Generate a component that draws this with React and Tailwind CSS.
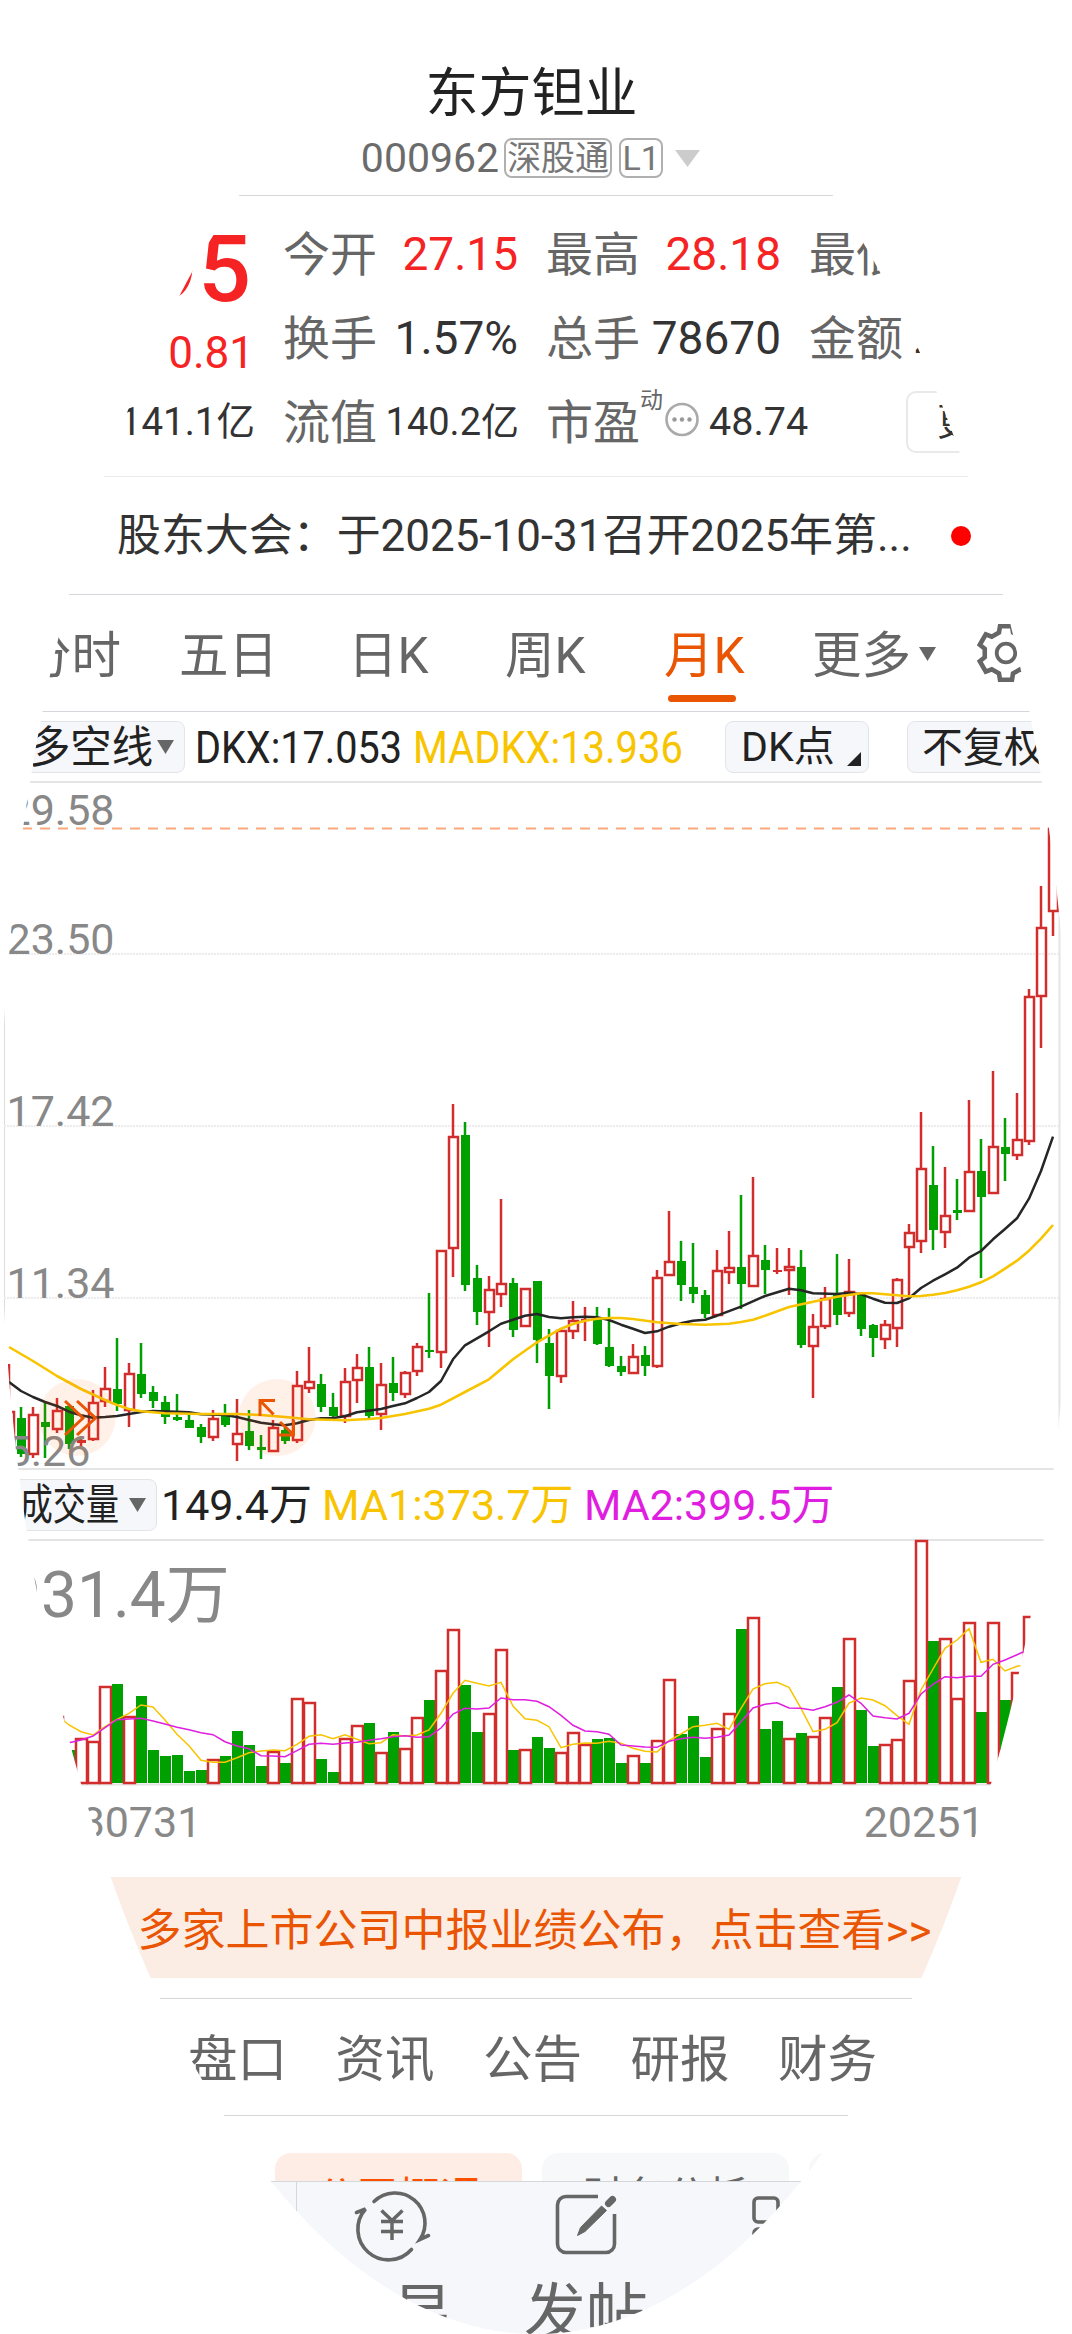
import { Fragment } from "react";

const RED = "#d22d2d";
const GREEN = "#00a000";
const ORANGE = "#ea5504";
const YELLOW = "#f8c400";
const MAGENTA = "#e01ee0";

const STEP = 12;
const FIRST_X = 9;
const VOL_BASE = 1783;

// [up, high, bodyTop, bodyBottom, low, volumeTop, volumeUp?]
const candles = [
  [1, 1364, 1411, 1455, 1460, 1730],
  [0, 1407, 1418, 1454, 1457, 1730],
  [1, 1407, 1414, 1455, 1458, 1730],
  [0, 1401, 1422, 1427, 1458, 1730],
  [1, 1398, 1410, 1430, 1433, 1716],
  [0, 1405, 1406, 1444, 1449, 1750],
  [1, 1436, 1440, 1443, 1447, 1738],
  [1, 1390, 1402, 1440, 1441, 1741],
  [1, 1367, 1388, 1402, 1407, 1686],
  [0, 1338, 1389, 1404, 1411, 1684],
  [1, 1363, 1373, 1411, 1427, 1716],
  [0, 1343, 1374, 1394, 1398, 1696],
  [0, 1386, 1392, 1401, 1408, 1750],
  [0, 1396, 1402, 1417, 1424, 1756],
  [0, 1394, 1417, 1420, 1421, 1755],
  [0, 1413, 1420, 1428, 1428, 1771],
  [0, 1424, 1427, 1437, 1443, 1770],
  [1, 1410, 1418, 1438, 1441, 1759],
  [0, 1404, 1416, 1425, 1427, 1756],
  [1, 1399, 1433, 1445, 1461, 1731, 0],
  [0, 1410, 1431, 1446, 1450, 1745],
  [0, 1435, 1447, 1450, 1459, 1766],
  [1, 1420, 1427, 1452, 1452, 1751],
  [0, 1425, 1430, 1441, 1444, 1763],
  [1, 1371, 1385, 1441, 1443, 1698],
  [1, 1347, 1381, 1389, 1393, 1702],
  [0, 1374, 1384, 1407, 1412, 1759],
  [0, 1393, 1407, 1416, 1418, 1772],
  [1, 1368, 1381, 1417, 1423, 1738],
  [1, 1354, 1367, 1381, 1403, 1725],
  [0, 1347, 1367, 1416, 1418, 1723],
  [1, 1363, 1384, 1415, 1430, 1752],
  [0, 1357, 1383, 1393, 1401, 1732],
  [1, 1371, 1372, 1395, 1398, 1748],
  [1, 1343, 1346, 1372, 1376, 1717],
  [0, 1293, 1350, 1352, 1358, 1700],
  [1, 1250, 1250, 1353, 1368, 1670],
  [1, 1104, 1136, 1249, 1277, 1629],
  [0, 1122, 1135, 1285, 1291, 1685],
  [0, 1265, 1278, 1312, 1325, 1732],
  [1, 1276, 1289, 1313, 1347, 1713],
  [1, 1199, 1283, 1295, 1307, 1649],
  [0, 1278, 1283, 1330, 1337, 1750],
  [1, 1288, 1288, 1327, 1327, 1749],
  [0, 1281, 1281, 1340, 1363, 1737],
  [0, 1329, 1343, 1376, 1409, 1748],
  [1, 1328, 1330, 1377, 1383, 1752],
  [1, 1301, 1320, 1332, 1339, 1732],
  [1, 1307, 1319, 1321, 1341, 1744],
  [0, 1307, 1319, 1344, 1345, 1739],
  [0, 1308, 1347, 1366, 1367, 1738],
  [0, 1356, 1366, 1372, 1376, 1763],
  [1, 1344, 1356, 1374, 1374, 1755],
  [0, 1346, 1355, 1366, 1376, 1763],
  [1, 1270, 1277, 1367, 1368, 1740],
  [1, 1211, 1261, 1276, 1276, 1679],
  [0, 1241, 1261, 1285, 1301, 1734],
  [0, 1243, 1287, 1294, 1303, 1716],
  [0, 1290, 1295, 1314, 1318, 1757],
  [1, 1250, 1270, 1316, 1316, 1728],
  [1, 1231, 1267, 1273, 1284, 1713],
  [0, 1195, 1267, 1284, 1309, 1629],
  [1, 1177, 1255, 1287, 1287, 1617],
  [0, 1245, 1260, 1270, 1294, 1729],
  [1, 1248, 1270, 1272, 1274, 1721, 0],
  [1, 1248, 1266, 1271, 1295, 1738],
  [0, 1250, 1267, 1345, 1348, 1733],
  [1, 1314, 1326, 1347, 1398, 1736],
  [1, 1287, 1298, 1327, 1329, 1717],
  [0, 1254, 1295, 1315, 1325, 1687],
  [1, 1259, 1291, 1314, 1317, 1638],
  [0, 1292, 1294, 1329, 1336, 1710],
  [0, 1324, 1325, 1338, 1357, 1746],
  [1, 1320, 1324, 1340, 1349, 1744],
  [1, 1278, 1279, 1329, 1347, 1739],
  [1, 1224, 1232, 1248, 1295, 1680],
  [1, 1112, 1168, 1242, 1253, 1540],
  [0, 1146, 1185, 1230, 1250, 1641],
  [1, 1167, 1215, 1233, 1248, 1638],
  [0, 1179, 1210, 1213, 1220, 1698, 1],
  [1, 1100, 1171, 1212, 1212, 1622],
  [0, 1139, 1171, 1197, 1278, 1712],
  [1, 1071, 1146, 1194, 1194, 1622],
  [0, 1118, 1147, 1154, 1181, 1700],
  [1, 1093, 1139, 1156, 1160, 1672],
  [1, 989, 996, 1142, 1145, 1616],
  [1, 886, 927, 997, 1048, 1700],
  [1, 827, 828, 912, 936, 1740],
];

const dkx = [
  [9, 1382], [21, 1391], [33, 1397], [45, 1402], [57, 1406], [69, 1411.7], [81, 1415.3],
  [93, 1417.7], [105, 1417], [117, 1416], [129, 1414], [141, 1412], [153, 1411], [177, 1411.7],
  [189, 1412.3], [201, 1414.3], [225, 1415], [237, 1417], [249, 1420], [261, 1422.7],
  [273, 1424.3], [285, 1425.3], [297, 1423.3], [309, 1420], [321, 1418.3], [333, 1418],
  [345, 1416.3], [357, 1412.3], [381, 1409], [393, 1406], [405, 1403.3], [417, 1398],
  [429, 1392], [441, 1381], [453, 1359.3], [465, 1345.3], [477, 1338.3], [489, 1331.3],
  [501, 1323.7], [513, 1319.7], [525, 1315.7], [537, 1314], [549, 1317], [561, 1318.3],
  [573, 1317.3], [585, 1316.7], [597, 1317.3], [609, 1320], [621, 1324.7], [633, 1328.7],
  [645, 1333], [657, 1331.3], [669, 1326.7], [681, 1323.3], [693, 1320.7], [705, 1319.7],
  [717, 1315.7], [741, 1306.7], [765, 1296], [789, 1288.7], [801, 1290.3], [813, 1293.3],
  [837, 1294], [849, 1292.7], [861, 1294.3], [873, 1298.7], [885, 1302.7], [897, 1303],
  [909, 1298.3], [921, 1288], [933, 1280.7], [945, 1274.3], [957, 1267.7], [969, 1257.7],
  [981, 1251], [993, 1239.3], [1005, 1229], [1017, 1218.3], [1029, 1198.7], [1041, 1171],
  [1053, 1136.7],
];

const madkx = [
  [9, 1347], [33, 1361], [57, 1376], [81, 1389], [105, 1400], [117, 1405], [129, 1409],
  [141, 1411.3], [165, 1413.3], [201, 1414], [237, 1414], [261, 1415], [285, 1417],
  [309, 1419.3], [345, 1420.3], [369, 1419], [381, 1418], [405, 1414], [429, 1408.7],
  [441, 1404.7], [465, 1392], [489, 1379.3], [513, 1359.3], [537, 1342.3], [561, 1328.7],
  [573, 1324], [585, 1320.7], [597, 1318.7], [609, 1318], [621, 1318], [633, 1319],
  [657, 1322.3], [681, 1324], [705, 1324.7], [717, 1324.3], [729, 1323.7], [741, 1322],
  [753, 1319.7], [765, 1315.7], [789, 1307], [813, 1301.7], [837, 1296.7], [861, 1293.3],
  [873, 1293.3], [897, 1295.3], [909, 1296.3], [921, 1296], [933, 1294.7], [945, 1293],
  [957, 1290.3], [969, 1286.7], [981, 1282.3], [993, 1276.3], [1005, 1268.7], [1017, 1260.7],
  [1029, 1250.7], [1041, 1238.7], [1053, 1225],
];

// moving averages of the volume, in thirds of a pixel, starting at candle 4
const volMa1 = [
  765, 795, 815, 825, 800, 778, 760, 735, 741, 780, 823, 857, 901, 907, 907, 893, 878, 873,
  870, 872, 853, 829, 824, 836, 824, 838, 851, 848, 824, 828, 825, 810, 760, 700, 661, 670,
  678, 667, 738, 776, 781, 800, 863, 853, 849, 850, 844, 850, 865, 874, 876, 842, 822, 800,
  796, 790, 808, 745, 687, 671, 667, 682, 745, 815, 808, 788, 729, 714, 720, 737, 767, 793,
  690, 627, 565, 540, 506, 607, 598, 633, 619, 615,
];
const volMa2 = [
  855, 848, 840, 828, 803, 779, 777, 775, 783, 792, 802, 809, 818, 824, 845, 858, 866, 887,
  888, 890, 872, 853, 850, 853, 849, 847, 841, 836, 830, 827, 832, 830, 804, 762, 745, 747,
  744, 714, 719, 719, 724, 740, 766, 796, 813, 815, 823, 855, 858, 861, 862, 844, 836, 832,
  835, 832, 825, 785, 744, 733, 728, 744, 745, 751, 740, 727, 705, 730, 768, 773, 777, 760,
  702, 673, 650, 653, 649, 649, 613, 600, 584, 568,
];

const toPoints = (list) => list.map((p) => p.join(",")).join(" ");
const volPoints = (list) =>
  list.map((v, i) => `${FIRST_X + (i + 4) * STEP},${(1460 + v / 3).toFixed(1)}`).join(" ");

const priceLabels = [
  ["29.58", 824.5],
  ["23.50", 953.5],
  ["17.42", 1125.5],
  ["11.34", 1297.5],
  ["5.26", 1465.5],
];

function Divider({ className = "bg-[#d6d7da]" }) {
  return <div className={`h-px w-full shrink-0 ${className}`} />;
}

function Caret({ className }) {
  return (
    <svg viewBox="0 0 10 8" preserveAspectRatio="none" className={`shrink-0 ${className}`}>
      <path d="M0 0H10L5 8Z" fill="currentColor" />
    </svg>
  );
}

function GearIcon() {
  const tooth = [
    [-7, -20.5],
    [-6, -26.8],
    [6, -26.8],
    [7, -20.5],
  ];
  const points = [];
  for (let k = 0; k < 6; k++) {
    const a = (k * Math.PI) / 3;
    tooth.forEach(([x, y]) => {
      const px = x * Math.cos(a) - y * Math.sin(a);
      const py = x * Math.sin(a) + y * Math.cos(a);
      points.push(`${px.toFixed(2)},${py.toFixed(2)}`);
    });
  }
  return (
    <svg viewBox="-30 -30 60 60" className="size-[60px] shrink-0" fill="none" stroke="#666" strokeWidth="4.6">
      <polygon points={points.join(" ")} />
      <circle r="9.3" strokeWidth="3.8" />
    </svg>
  );
}

function Header() {
  return (
    <header className="flex h-[195px] flex-col items-center pt-[64px]">
      <h1 className="mr-[9px] text-[53px] leading-[60px] font-normal text-[#222]">东方钽业</h1>
      <div className="mt-[14px] mr-[11px] flex h-10 items-center text-[#777]">
        <span className="mr-[5px] text-[41px] leading-10 text-[#6b6b6b]">000962</span>
        <span className="mr-[7px] flex h-10 w-[108px] items-center justify-center rounded-lg border-2 border-[#b0b0b0] text-[34px] leading-9">
          深股通
        </span>
        <span className="flex h-10 w-11 items-center justify-center rounded-lg border-2 border-[#b0b0b0] text-[34px] leading-9">
          L1
        </span>
        <Caret className="ml-3 h-[17px] w-[25px] text-[#ccc]" />
      </div>
    </header>
  );
}

function Stat({ label, value, className = "pl-[28px]", valueClass = "text-[46px] text-[#333]" }) {
  return (
    <div className={`flex h-[84px] items-center justify-between whitespace-nowrap ${className}`}>
      <span className="text-[47px] text-[#666]">{label}</span>
      <span className={valueClass}>{value}</span>
    </div>
  );
}

function Stats() {
  return (
    <section className="flex h-[280px] pt-[16px] leading-none">
      <div className="flex w-[255px] shrink-0 flex-col items-end whitespace-nowrap">
        <span className="mr-[4px] flex h-[114px] items-center text-[93px] font-medium text-[#f52323]">27.95</span>
        <span className="mr-[1px] flex h-[53px] items-center text-[44px] text-[#f52323]">0.81</span>
        <span className="flex h-[86px] items-center text-[38.5px] text-[#333]">141.1亿</span>
      </div>
      <div className="grid shrink-0 grid-cols-[264px_262px_262px] content-start">
        <Stat label="今开" value="27.15" valueClass="mr-px text-[46px] text-[#f52323]" />
        <Stat label="最高" value="28.18" className="pl-[27px]" valueClass="text-[46px] text-[#f52323]" />
        <Stat label="最低" value="26.80" valueClass="text-[46px] text-[#00a000]" />
        <Stat label="换手" value="1.57%" valueClass="mr-px text-[46px] text-[#333]" />
        <Stat label="总手" value="78670" className="pl-[27px]" />
        <Stat label="金额" value="2.17亿" valueClass="text-[44px] text-[#333]" />
        <Stat label="流值" value="140.2亿" valueClass="text-[38px] text-[#333]" />
        <div className="flex h-[84px] items-center pl-[27px] whitespace-nowrap">
          <span className="text-[47px] text-[#666]">市盈</span>
          <span className="mb-11 text-[23px] text-[#666]">动</span>
          <svg viewBox="0 0 36 36" className="mr-[2px] ml-px size-9 shrink-0 overflow-visible" fill="none">
            <circle cx="18" cy="15.5" r="15.5" stroke="#aaa" strokeWidth="2.6" />
            <circle cx="10.5" cy="15.5" r="2.2" fill="#999" />
            <circle cx="18" cy="15.5" r="2.2" fill="#999" />
            <circle cx="25.5" cy="15.5" r="2.2" fill="#999" />
          </svg>
          <span className="ml-[7px] text-[39.5px] text-[#333]">48.74</span>
        </div>
        <div className="flex h-[84px] items-center pl-[125px]">
          <span className="flex h-[62px] w-[138px] shrink-0 items-center justify-center rounded-[10px] border-2 border-[#e9e9ea] text-[38px] text-[#333]">
            更多
          </span>
        </div>
      </div>
    </section>
  );
}

function News() {
  return (
    <section className="flex h-[117px] items-center pl-[117px] text-[43.95px] leading-none whitespace-nowrap text-[#333]">
      <span className="mt-[2px] w-[834px]">股东大会：于2025-10-31召开2025年第...</span>
      <span className="size-5 rounded-full bg-[#f00]" />
    </section>
  );
}

const periods = [
  ["分时", "ml-[22px] w-[157px]"],
  ["五日", "w-[169px]"],
  ["日K", "w-[157px]"],
  ["周K", "w-[159px]"],
  ["月K", "w-[148px]"],
  ["更多", "w-[107px]"],
];

function PeriodTabs() {
  return (
    <nav className="flex h-[116px] text-[49.5px] leading-[50px] whitespace-nowrap text-[#666]">
      {periods.map(([name, cls]) => (
        <div key={name} className={`flex shrink-0 flex-col pt-[36px] ${cls}`}>
          <span className={name === "月K" ? "text-[#ea5504]" : ""}>{name}</span>
          {name === "月K" && <span className="mt-[14px] ml-[4px] h-[7px] w-[68px] rounded-full bg-[#ea5504]" />}
        </div>
      ))}
      <Caret className="mt-[52px] h-[14px] w-[17px]" />
      <div className="mt-[28px] ml-[40px]">
        <GearIcon />
      </div>
    </nav>
  );
}

function IndicatorBar() {
  return (
    <section className="flex h-[69px] items-center text-[41px] leading-none whitespace-nowrap text-[#222]">
      <div className="flex h-[52px] w-[185px] shrink-0 items-center justify-end rounded-lg border border-[#e2e4e8] bg-[#f6f7fa] pr-[10px]">
        <span className="mt-[3px] w-[132px] origin-right scale-x-[.94] text-right text-[44px]">多空线</span>
        <Caret className="ml-[4px] h-[14px] w-[17px] text-[#666]" />
      </div>
      <span className="mt-[2px] ml-[10px] w-[217px] shrink-0 origin-left scale-x-90 text-[44px]">DKX:17.053</span>
      <span className="mt-[2px] ml-px w-[312px] shrink-0 origin-left scale-x-[.907] text-[44px] text-[#f8c400]">
        MADKX:13.936
      </span>
      <div className="flex h-[52px] w-[144px] shrink-0 items-center rounded-lg border border-[#e2e4e8] bg-[#f6f7fa] pl-[15px]">
        <span className="mt-[2px]">DK点</span>
        <svg viewBox="0 0 14 14" className="mt-6 ml-[12px] size-[14px]">
          <path d="M14 0V14H0Z" fill="#222" />
        </svg>
      </div>
      <div className="ml-[38px] flex h-[52px] w-[161px] shrink-0 items-center rounded-lg border border-[#e2e4e8] bg-[#f6f7fa] pl-[14px]">
        <span className="mt-[3px]">不复权</span>
      </div>
    </section>
  );
}

function PriceChart() {
  return (
    <svg viewBox="0 781 1072 689" className="block h-[689px] w-full shrink-0">
      <path d="M0 782H1072M0 1469H1072" stroke="#e4e4e4" strokeWidth="2" />
      <path d="M4.5 782V1469" stroke="#ddd" />
      <path d="M1059.5 782V1469" stroke="#e4e4e4" strokeWidth="2" />
      <path d="M4 954H1059M4 1126H1059M4 1298H1059" stroke="#ececec" strokeWidth="2" strokeDasharray="2 1" />
      <path d="M4 828.5H1050" stroke="#f9a97c" strokeWidth="2" strokeDasharray="10 8" />

      {candles.map(([up, high, top, bottom, low], i) => {
        const x = FIRST_X + i * STEP;
        const color = up ? RED : GREEN;
        return (
          <Fragment key={i}>
            <path d={`M${x} ${high}V${top}M${x} ${bottom}V${low}`} stroke={color} strokeWidth="2.5" />
            {up && bottom - top > 3 ? (
              <rect x={x - 4} y={top + 1} width="9" height={bottom - top - 2} fill="none" stroke={color} strokeWidth="2.5" />
            ) : (
              <rect x={x - 4} y={top} width="9" height={bottom - top} fill={color} />
            )}
          </Fragment>
        );
      })}

      <polyline points={toPoints(dkx)} fill="none" stroke="#262626" strokeWidth="2.5" strokeLinejoin="round" />
      <polyline points={toPoints(madkx)} fill="none" stroke={YELLOW} strokeWidth="2.6" strokeLinejoin="round" />

      {priceLabels.map(([text, y]) => (
        <text key={text} x="6.5" y={y} fontSize="43" fill="#888">
          {text}
        </text>
      ))}

      {/* signal markers */}
      <g fill="none" stroke={ORANGE} strokeWidth="3">
        <circle cx="77" cy="1417.5" r="38.5" fill="#ff5a00" fillOpacity="0.09" stroke="none" />
        <path d="M65 1401L83 1418L65 1435M77 1401L95.5 1418L77 1435" />
        <circle cx="277" cy="1417.5" r="38.5" fill="#ff5a00" fillOpacity="0.09" stroke="none" />
        <path d="M260 1416V1400.5H275M260 1400.5L273.5 1414.5" />
        <path d="M280 1422L293.5 1434.5M279 1435H293.5V1420" />
      </g>
    </svg>
  );
}

function VolumeBar() {
  return (
    <section className="flex h-[69px] items-center text-[43px] leading-none whitespace-nowrap">
      <div className="flex h-[52px] w-[157px] shrink-0 items-center justify-end rounded-lg border border-[#e2e4e8] bg-[#f6f7fa] pr-[10px]">
        <span className="mt-[2px] w-[129px] origin-right scale-x-[.77] text-right text-[#222]">成交量</span>
        <Caret className="ml-[10px] h-[14px] w-[17px] text-[#666]" />
      </div>
      <span className="mt-px ml-[4px] w-[161px] text-[#222]">149.4万</span>
      <span className="mt-px w-[263px] text-[#f8c400]">MA1:373.7万</span>
      <span className="mt-px ml-[-1px] text-[42.8px] text-[#e01ee0]">MA2:399.5万</span>
    </section>
  );
}

function VolumeChart() {
  return (
    <svg viewBox="0 1539 1072 247" className="block h-[247px] w-full shrink-0">
      <path d="M0 1540H1072M0 1784.5H1072" stroke="#e4e4e4" strokeWidth="2" />
      {candles.map((c, i) => {
        const x = FIRST_X + i * STEP;
        const up = c[6] ?? c[0];
        const top = c[5];
        return up ? (
          <rect key={i} x={x - 5} y={top + 1} width="11" height={VOL_BASE - top - 1} fill="#fff" stroke={RED} strokeWidth="2.5" />
        ) : (
          <rect key={i} x={x - 5} y={top} width="11" height={VOL_BASE - top} fill={GREEN} />
        );
      })}
      <polyline points={volPoints(volMa1)} fill="none" stroke={YELLOW} strokeWidth="1.5" />
      <polyline points={volPoints(volMa2)} fill="none" stroke={MAGENTA} strokeWidth="1.5" />
      <text x="5" y="1617" fontSize="64" fill="#888">
        931.4万
      </text>
    </svg>
  );
}

const bottomItems = [
  {
    name: "交易",
    icon: (
      <g strokeLinecap="round">
        <path d="M16 9.5A30 30 0 0 1 62 47.5L70.5 43.5" />
        <path d="M53.5 57.5A30 30 0 0 1 7.5 17L-1.5 20.5" />
        <path d="M23.5 18.5L34 28.5L44.5 18.5M23 29.5H45M23 39.5H45M34 29V48" strokeLinecap="butt" strokeWidth="3.5" />
      </g>
    ),
  },
  {
    name: "发帖",
    icon: (
      <>
        <path d="M45 4.5H13A8.5 8.5 0 0 0 4.5 13V52A8.5 8.5 0 0 0 13 60.5H53A8.5 8.5 0 0 0 61.5 52V22" />
        <path d="M48.5 14L53.5 18.5L32 39.5L24.5 43.5L27.5 35.5Z" fill="#666" stroke="#666" strokeWidth="1" />
        <path d="M55.5 11.5L59.5 7.5" strokeWidth="7" strokeLinecap="round" />
      </>
    ),
  },
  {
    name: "更多",
    icon: (
      <>
        <rect x="6" y="6" width="24" height="24" rx="4" />
        <rect x="6" y="37" width="24" height="24" rx="4" />
        <rect x="42" y="6" width="24" height="24" rx="4" />
        <rect x="42" y="37" width="24" height="24" rx="4" />
      </>
    ),
  },
];

function BottomBar() {
  return (
    <footer className="flex h-[152px] shrink-0 bg-[#f6f7fa] pl-[296px] text-[62px] leading-none text-[#666]">
      <div className="flex border-l border-[#d6d7da]">
        {bottomItems.map((item) => (
          <div key={item.name} className="flex w-[195px] flex-col items-center pt-[10px] pr-[7px]">
            <svg viewBox="0 0 66 66" className="size-[66px] overflow-visible" fill="none" stroke="#666" strokeWidth="3.6">
              {item.icon}
            </svg>
            <span className="mt-[25px]">{item.name}</span>
          </div>
        ))}
      </div>
    </footer>
  );
}

function App() {
  return (
    <div className="h-[2334px] w-[1072px] bg-white [font-family:Roboto,'Noto_Sans_CJK_SC',sans-serif]">
      <div className="flex h-full w-full flex-col overflow-hidden rounded-[50%] bg-white">
        <Header />
        <Divider />
        <Stats />
        <Divider className="bg-[#ebebec]" />
        <News />
        <Divider className="bg-[#d5d6dc]" />
        <PeriodTabs />
        <Divider className="bg-[#d5d6dc]" />
        <IndicatorBar />
        <PriceChart />
        <VolumeBar />
        <VolumeChart />

        <div className="flex h-[91px] justify-between pt-[11px] pr-[15px] pl-[8px] text-[43px] leading-[50px] text-[#888]">
          <span>20180731</span>
          <span>20251031</span>
        </div>

        <div className="flex h-[101px] shrink-0 items-center justify-center bg-[#fcede4] pt-[6px] pr-[3px] text-[44px] leading-none whitespace-nowrap text-[#ea5504]">
          多家上市公司中报业绩公布，点击查看&gt;&gt;
        </div>

        <Divider className="mt-[20px] bg-[#d6d7da]" />
        <nav className="flex h-[116px] shrink-0 items-center justify-center gap-[48.5px] pt-[8px] pr-[7px] text-[49.5px] leading-none text-[#666]">
          {["盘口", "资讯", "公告", "研报", "财务"].map((t) => (
            <span key={t}>{t}</span>
          ))}
        </nav>
        <Divider />

        <div className="mt-[37px] flex h-[28px] shrink-0 gap-5 overflow-hidden pl-[275px] text-[41.5px] leading-none text-[#666]">
          <div className="flex h-20 w-[247px] shrink-0 justify-center rounded-2xl bg-[#feede5] pt-[24px] text-[#ff5000]">
            公司概况
          </div>
          <div className="flex h-20 w-[247px] shrink-0 justify-center rounded-2xl bg-[#f7f8fa] pt-[24px]">财务分析</div>
          <div className="h-20 w-[247px] shrink-0 rounded-2xl bg-[#f7f8fa]" />
        </div>
        <Divider />
        <BottomBar />
      </div>
    </div>
  );
}

export default App;
